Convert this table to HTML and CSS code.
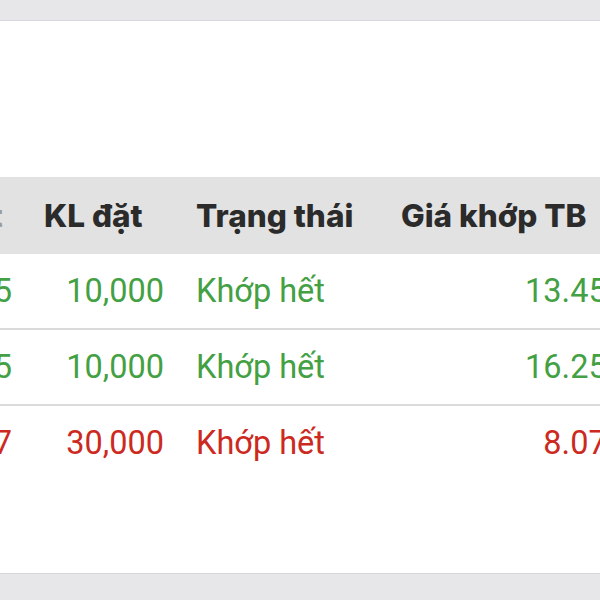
FILE: index.html
```html
<!DOCTYPE html>
<html lang="vi">
<head>
<meta charset="utf-8">
<link rel="stylesheet" href="styles.css">
</head>
<body>
<div class="band band-top"></div>
<main class="card">
  <div class="table-wrap">
    <table class="orders">
      <colgroup>
        <col class="c0"><col class="c1"><col class="c2"><col class="c3">
      </colgroup>
      <thead>
        <tr>
          <th>Giá đặt</th>
          <th>KL đặt</th>
          <th>Trạng thái</th>
          <th>Giá khớp TB</th>
        </tr>
      </thead>
      <tbody>
        <tr class="buy">
          <td class="num">13.45</td>
          <td class="num">10,000</td>
          <td>Khớp hết</td>
          <td class="num">13.450</td>
        </tr>
        <tr class="buy">
          <td class="num">16.25</td>
          <td class="num">10,000</td>
          <td>Khớp hết</td>
          <td class="num">16.250</td>
        </tr>
        <tr class="sell">
          <td class="num">8.07</td>
          <td class="num">30,000</td>
          <td>Khớp hết</td>
          <td class="num">8.070</td>
        </tr>
      </tbody>
    </table>
  </div>
</main>
<div class="band band-bottom"></div>
</body>
</html>
```
FILE: styles.css
```css
html, body {
  margin: 0;
  padding: 0;
  background: #ffffff;
  width: 600px;
  height: 600px;
  overflow: hidden;
}
body {
  display: flex;
  flex-direction: column;
  font-family: Roboto, "Liberation Sans", sans-serif;
}
.band {
  background: #e7e7e9;
  flex: none;
}
.band-top {
  height: 20px;
  border-bottom: 1px solid #d9d7df;
}
.band-bottom {
  height: 26px;
  border-top: 1px solid #d6d6d6;
}
.card {
  flex: 1;
  background: #ffffff;
  padding-top: 156px;
  overflow: hidden;
}
.table-wrap {
  width: 600px;
  overflow: hidden;
}
.orders {
  border-collapse: collapse;
  table-layout: fixed;
  width: 763px;
  margin-left: -122px;
}
.c0 { width: 150px; }
.c1 { width: 152px; }
.c2 { width: 205px; }
.c3 { width: 256px; }
.orders th {
  height: 77px;
  background: #e2e2e2;
  color: #2b2b2b;
  font-family: Inter, "Open Sans", sans-serif;
  font-weight: 800;
  font-size: 31.5px;
  text-align: left;
  padding: 0 16px;
  white-space: nowrap;
  overflow: hidden;
}
.orders th:first-child {
  text-align: right;
  padding-right: 26px;
  color: #9a9a9a;
}
.orders td {
  height: 74px;
  padding: 0 16px;
  font-size: 32.5px;
  white-space: nowrap;
  overflow: hidden;
  text-align: left;
}
.orders td.num {
  text-align: right;
}
.orders tbody tr + tr td {
  border-top: 2px solid #dadada;
}
.buy td { color: #43a043; }
.sell td { color: #cc2a20; }
```
